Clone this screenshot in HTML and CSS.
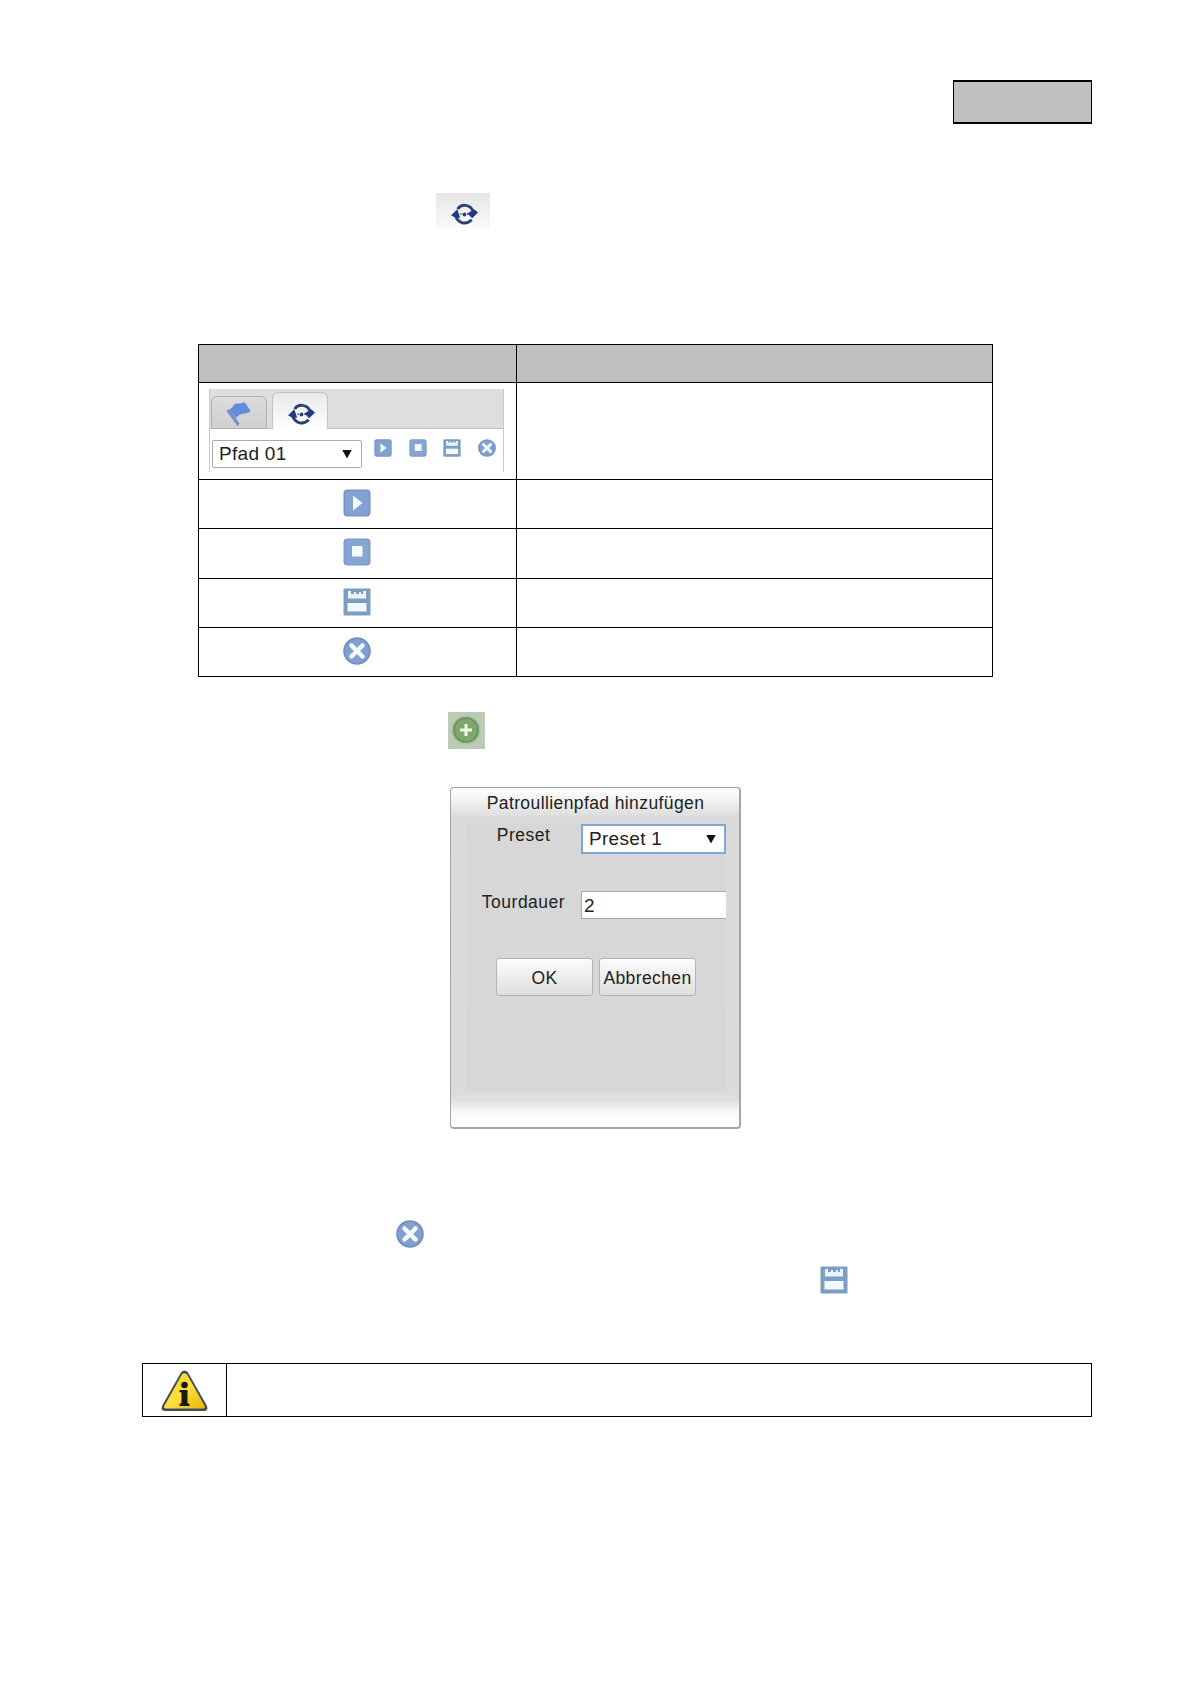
FILE: index.html
```
<!DOCTYPE html>
<html lang="de">
<head>
    <meta charset="UTF-8">
    <title>Patroullienpfad</title>
    <link rel="stylesheet" href="styles.css">
</head>
<body>
    <!-- Shared icons -->
    <svg class="icon-defs" width="0" height="0" xmlns="http://www.w3.org/2000/svg">
        <symbol id="play" viewBox="0 0 28 28">
            <rect x="0.5" y="0.5" width="27" height="27" rx="4" fill="#7494c8"/>
            <rect x="2" y="2" width="24" height="24" rx="3" fill="#83a1d2"/>
            <path d="M10 6.5L19.500 14L10 21.500Z" fill="#f4fbff"/>
        </symbol>
        <symbol id="stop" viewBox="0 0 28 28">
            <rect x="0.5" y="0.5" width="27" height="27" rx="4" fill="#7b9bcd"/>
            <rect x="2" y="2" width="24" height="24" rx="3" fill="#87a5d3"/>
            <rect x="9" y="8" width="10.500" height="10.500" fill="#f4fbff"/>
        </symbol>
        <symbol id="save" viewBox="0 0 28 28">
            <rect x="0.5" y="0.5" width="27" height="27" rx="1" fill="#7f9dc3"/>
            <path d="M5 3H8V6H11V4H13V6H16V4H18V6H20V3H23V10.500H5Z" fill="#eaf5fb"/>
            <rect x="4.500" y="15" width="19" height="8.500" fill="#f0f9fd"/>
        </symbol>
        <symbol id="close" viewBox="0 0 28 28">
            <circle cx="14" cy="14" r="13.800" fill="#7390c2"/>
            <circle cx="14" cy="14" r="12" fill="#829fd0"/>
            <path d="M8.500 8.500L19.500 19.500M19.500 8.500L8.500 19.500" stroke="#f4fbff" stroke-width="4.500" stroke-linecap="round"/>
        </symbol>
        <symbol id="cycle" viewBox="0 0 28 22">
            <path d="M7 6C10 0.500 20 0 23 8.500" fill="none" stroke="#29436f" stroke-width="3"/>
            <path d="M4.500 12C7 21.500 16 22.500 21.500 17" fill="none" stroke="#29436f" stroke-width="3"/>
            <path d="M17 10.500L24 6L28 9.500L22 15.500Z" fill="#20397f"/>
            <path d="M0 12.500L6.500 6L9.500 15L5 15Z" fill="#20397f"/>
            <circle cx="14" cy="11.500" r="2" fill="#29407c"/>
            <circle cx="10.500" cy="11" r="0.900" fill="#29407c"/>
            <circle cx="17.500" cy="11" r="0.900" fill="#29407c"/>
        </symbol>
        <symbol id="flag" viewBox="0 0 25 25">
            <path d="M0.500 9L3 7L13.500 21.500L11.500 24Z" fill="#6f8fcc"/>
            <path d="M3 7.500C7 6.500 7 1.500 11 1.500C14 1.500 16 1 19 0.500L24.500 9C21 13 16 9 10 16Z" fill="#648cd9"/>
        </symbol>
    </svg>

    <div class="page">
        <div class="language-box"></div>

        <div class="tab-sample">
            <svg width="27" height="22"><use href="#cycle"/></svg>
        </div>

        <table class="functions">
            <tr class="head"><th></th><th></th></tr>
            <tr class="panel-row">
                <td>
                    <div class="path-panel">
                        <div class="tabs">
                            <div class="tab">
                                <svg width="25" height="25"><use href="#flag"/></svg>
                            </div>
                            <div class="tab active">
                                <svg width="27" height="22"><use href="#cycle"/></svg>
                            </div>
                        </div>
                        <div class="path-controls">
                            <div class="select path-select">
                                <span>Pfad 01</span>
                                <i class="arrow"></i>
                            </div>
                            <div class="path-icons">
                                <svg width="18" height="18"><use href="#play"/></svg>
                                <svg width="18" height="18"><use href="#stop"/></svg>
                                <svg width="18" height="18"><use href="#save"/></svg>
                                <svg width="18" height="18"><use href="#close"/></svg>
                            </div>
                        </div>
                    </div>
                </td>
                <td></td>
            </tr>
            <tr class="row"><td><svg class="icon" width="28" height="28"><use href="#play"/></svg></td><td></td></tr>
            <tr class="row tall"><td><svg class="icon" width="28" height="28"><use href="#stop"/></svg></td><td></td></tr>
            <tr class="row"><td><svg class="icon" width="28" height="28"><use href="#save"/></svg></td><td></td></tr>
            <tr class="row"><td><svg class="icon" width="28" height="28"><use href="#close"/></svg></td><td></td></tr>
        </table>

        <div class="add-button">
            <svg width="37" height="37" viewBox="0 0 37 37">
                <circle cx="18" cy="18" r="14.500" fill="#a9c39c"/>
                <circle cx="18" cy="18" r="13" fill="#6f955f"/>
                <circle cx="18" cy="18" r="11" fill="#80a86e"/>
                <path d="M18 12V24M12 18H24" stroke="#f0f9df" stroke-width="3"/>
            </svg>
        </div>

        <div class="dialog">
            <div class="dialog-title"><span>Patroullienpfad hinzufügen</span></div>
            <div class="dialog-body">
                <div class="field">
                    <label>Preset</label>
                    <div class="select preset-select">
                        <span>Preset 1</span>
                        <i class="arrow"></i>
                    </div>
                </div>
                <div class="field duration">
                    <label>Tourdauer</label>
                    <div class="input">2</div>
                </div>
                <div class="buttons">
                    <button>OK</button>
                    <button>Abbrechen</button>
                </div>
            </div>
        </div>

        <svg class="delete-icon" width="28" height="28"><use href="#close"/></svg>
        <svg class="save-icon" width="28" height="28"><use href="#save"/></svg>

        <div class="note">
            <div class="note-icon">
                <svg width="47" height="42" viewBox="0 0 47 42">
                    <defs>
                        <linearGradient id="warnFill" x1="0" y1="0" x2="1" y2="1">
                            <stop offset="0" stop-color="#f5cf25"/>
                            <stop offset="0.5" stop-color="#fbe040"/>
                            <stop offset="1" stop-color="#eab805"/>
                        </linearGradient>
                    </defs>
                    <path d="M20 2.500Q23.500 -1.500 27 2.500L45.500 35Q48 41 43 41H4Q-1 41 1.500 35Z" fill="#454a57"/>
                    <path d="M21 4.500Q23.500 2 26 4.500L43.500 35.500Q45 38.500 42 38.500H5Q2 38.500 3.500 35.500Z" fill="url(#warnFill)"/>
                    <circle cx="23.500" cy="15" r="3.300" fill="#1b1810"/>
                    <path d="M18.500 20H26.500V33L28.500 34V36H18.500V34L20.500 33V22.500L18.500 22Z" fill="#1b1810"/>
                </svg>
            </div>
            <div class="note-text"></div>
        </div>
    </div>
</body>
</html>
```
FILE: styles.css
```
* {
    box-sizing: border-box;
}
body {
    margin: 0;
    background-color: #fff;
    font-family: "Liberation Sans", Arial, sans-serif;
    color: #222;
}
svg {
    display: block;
}
.icon-defs {
    display: none;
}
.page {
    display: flex;
    flex-direction: column;
    width: 1191px;
    height: 1684px;
    padding: 80px 99px 0 142px;
}
.language-box {
    align-self: flex-end;
    width: 139px;
    height: 44px;
    border: solid #000;
    border-width: 2px 1px;
    background-color: #c0c0c0;
}
.tab-sample {
    width: 54px;
    height: 35px;
    margin: 69px 0 0 294px;
    padding: 10px 0 0 15px;
    background: linear-gradient(to bottom, #e6e6e6, #fafafa);
}

/* Table of functions */
.functions {
    width: 795px;
    margin: 116px 0 0 56px;
    border-collapse: separate;
    border-spacing: 0;
    border: solid #000;
    border-width: 1px 0 0 1px;
    table-layout: fixed;
}
.functions th,
.functions td {
    padding: 0;
    border: solid #000;
    border-width: 0 1px 1px 0;
    vertical-align: top;
}
.functions th:first-child {
    width: 318px;
}
.head th {
    height: 38px;
    background-color: #bfbfbf;
}
.panel-row td {
    height: 97px;
}
.row td {
    height: 49px;
}
.row.tall td {
    height: 50px;
}
.icon {
    margin: 9px auto 0 144px;
}

/* Path panel */
.path-panel {
    width: 295px;
    height: 83px;
    margin: 6px 0 0 10px;
    border: solid #c8c8c8;
    border-width: 0 1px;
    background-color: #fff;
}
.tabs {
    display: flex;
    align-items: flex-end;
    gap: 5px;
    height: 40px;
    padding-left: 1px;
    background-color: #dedede;
    box-shadow: inset 0 -1px #c2c2c2;
}
.tab {
    display: flex;
    justify-content: center;
    width: 56px;
    height: 33px;
    padding: 5px 2px 0 0;
    border: 1px solid #b0b0b0;
    border-radius: 6px 6px 0 0;
    background: linear-gradient(to bottom, #dcdcdc, #cfcfcf);
}
.tab.active {
    height: 37px;
    padding: 10px 0 0 3px;
    border-color: #c2c2c2;
    border-bottom: 0;
    background: linear-gradient(to bottom, #e9e9e9, #fff);
}
.path-controls {
    display: flex;
    padding: 11px 0 0 2px;
}
.select {
    display: flex;
    align-items: center;
    justify-content: space-between;
    background-color: #fff;
    font-size: 19px;
}
.path-select {
    width: 150px;
    height: 28px;
    padding: 0 9px 0 6px;
    border: 1px solid #aaa;
    border-radius: 2px;
    letter-spacing: 0.300px;
}
.arrow {
    width: 10px;
    height: 9px;
    background-color: #111;
    clip-path: polygon(0 0, 100% 0, 50% 100%);
}
.path-icons {
    display: flex;
    gap: 16.500px;
    margin-top: -1px;
    padding-left: 12px;
}

.add-button {
    width: 37px;
    height: 37px;
    margin: 35px 0 0 306px;
    background-color: #bccbb6;
}

/* Dialog */
.dialog {
    width: 291px;
    height: 342px;
    margin: 38px 0 0 308px;
    border: 1px solid #a5a5a5;
    border-right-width: 2px;
    border-bottom-width: 2px;
    border-radius: 4px;
    background: linear-gradient(to bottom, #fff 0, #f2f2f2 12px, #dbdbdb 30px, #dadada 300px, #e0e0e0 313px, #fafafa 325px, #fff 100%);
}
.dialog-title {
    height: 36px;
    padding: 5px 0 0 1px;
    text-align: center;
    font-size: 17.500px;
    letter-spacing: 0.400px;
    line-height: 20px;
}
.dialog-body {
    width: 260px;
    height: 268px;
    margin-left: 15px;
    background-color: #d7d7d7;
}
.field {
    display: flex;
    height: 67px;
}
.field label {
    width: 115px;
    padding-top: 1px;
    font-size: 17.500px;
    letter-spacing: 0.500px;
    line-height: 20px;
    text-align: center;
}
.preset-select {
    width: 145px;
    height: 30px;
    padding: 0 8px 0 6px;
    border: 2px solid #7fa5d9;
    letter-spacing: 0.300px;
}
.input {
    width: 145px;
    height: 28px;
    padding-left: 2px;
    border: 1px solid #aaa;
    border-right: 0;
    background-color: #fff;
    font-size: 19px;
    line-height: 27px;
}
.buttons {
    display: flex;
    gap: 6px;
    padding-left: 30px;
}
button {
    width: 97px;
    height: 38px;
    padding: 2px 0 0;
    border: 1px solid #b3b3b3;
    border-radius: 3px;
    background: linear-gradient(to bottom, #fcfcfc, #dedede);
    color: #222;
    font-family: inherit;
    font-size: 17.500px;
    letter-spacing: 0.400px;
}

.delete-icon {
    margin: 91px 0 0 254px;
}
.save-icon {
    margin: 18px 0 0 678px;
}

/* Note with warning sign */
.note {
    display: flex;
    height: 54px;
    margin-top: 69px;
    border: 1px solid #000;
}
.note-icon {
    width: 84px;
    padding: 6px 0 0 18px;
    border-right: 1px solid #000;
}
.note-text {
    flex: 1;
}
```
